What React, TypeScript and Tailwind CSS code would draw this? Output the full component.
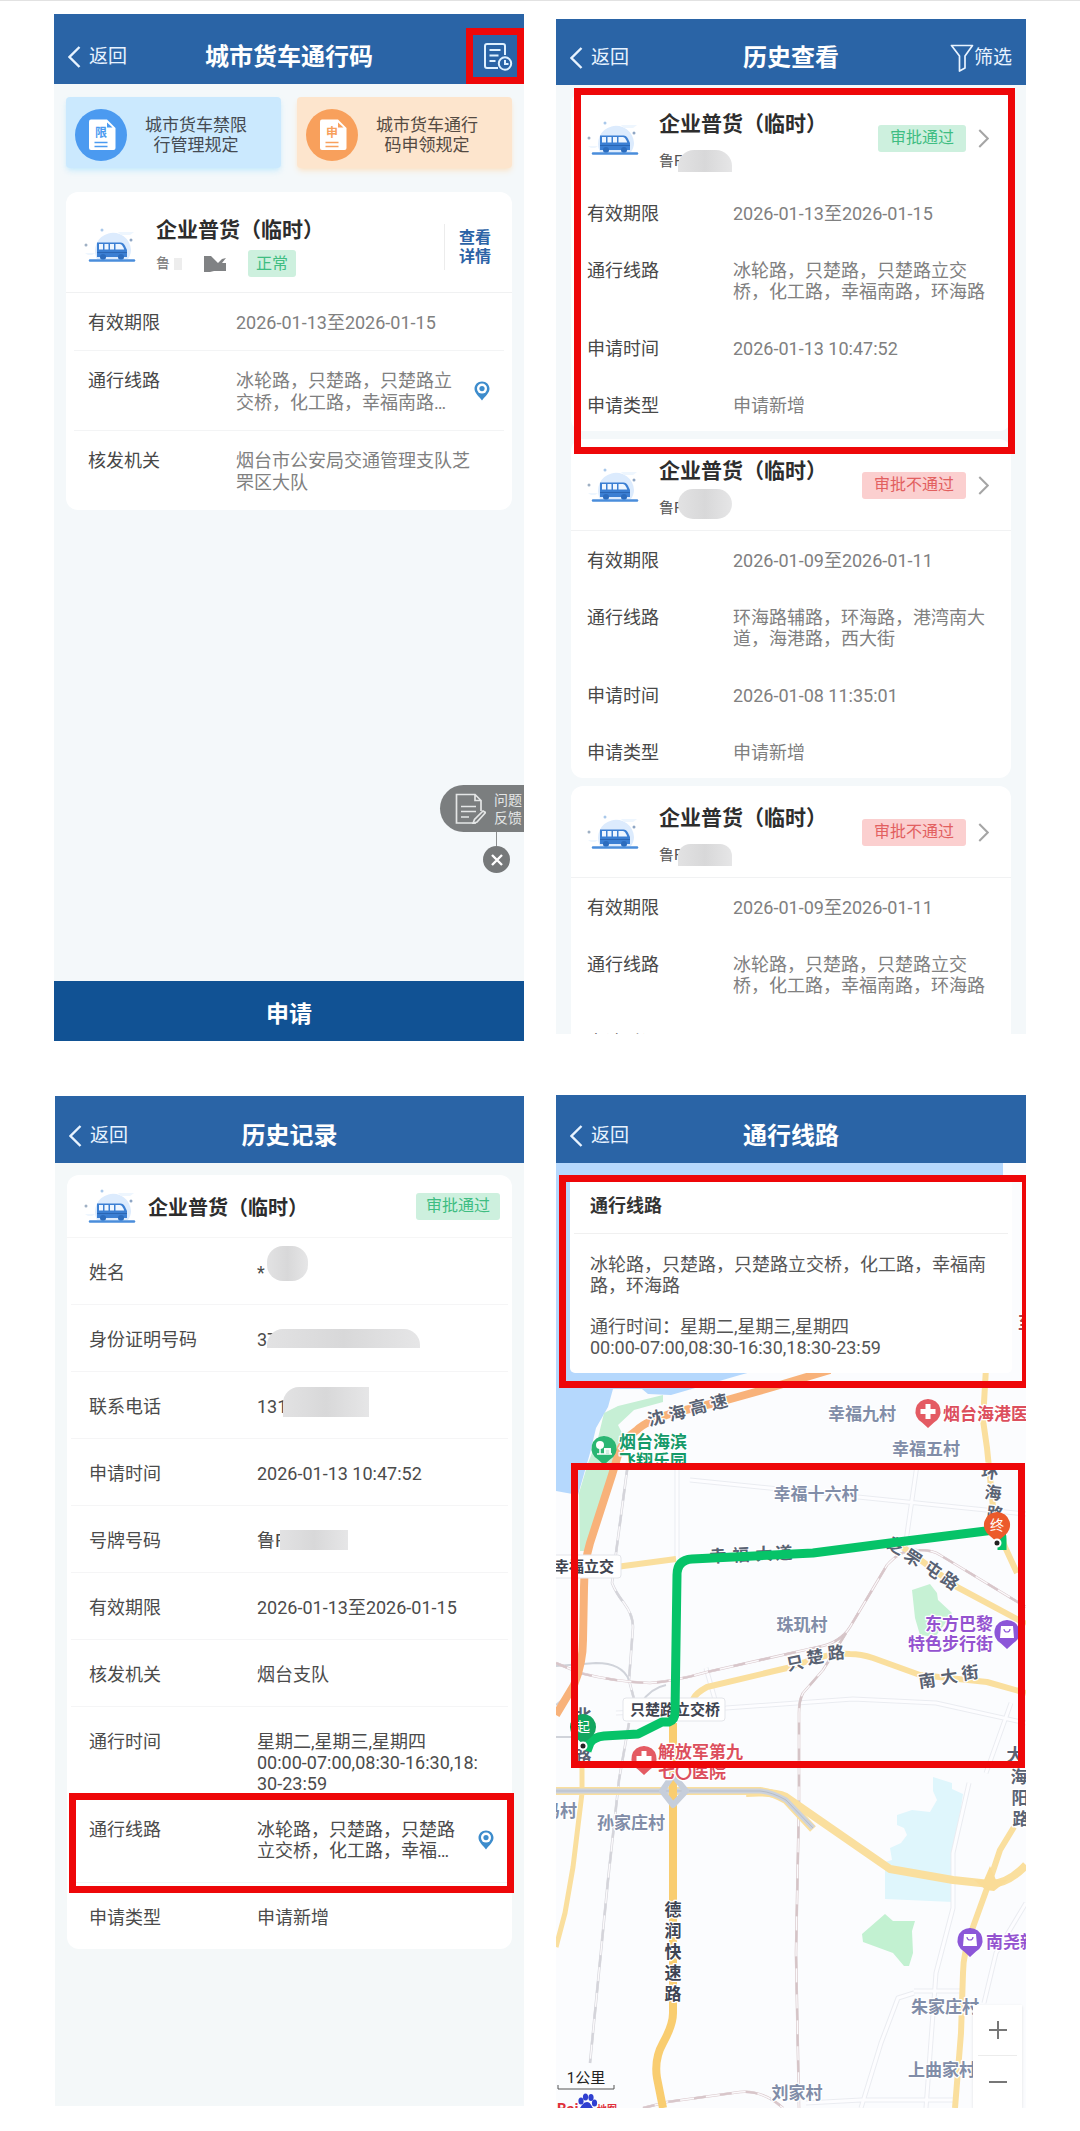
import type { ReactNode } from "react";
import { clsx } from "clsx";

const ROUTE = "冰轮路，只楚路，只楚路立交桥，化工路，幸福南路，环海路";

function BusIcon({ className }: { className?: string }) {
  return (
    <svg viewBox="0 0 52 38" className={clsx("h-[38px] w-[52px] shrink-0", className)} aria-hidden>
      <path d="M13 33a18 18 0 1 1 34-9c0 3-1 6-3 9z" fill="#dcebfd" />
      <path d="M34 6h16l-4 3h-9zM1 27h10l-3 2H4z" fill="#eef6fe" />
      <circle cx="18" cy="4" r="1.5" fill="#a9c8ea" />
      <circle cx="47" cy="14" r="1.5" fill="#8fa6c4" />
      <circle cx="2" cy="19" r="1.5" fill="#9fb0c4" />
      <path d="M13 16.5h23.5c2 0 3.200 1 4.500 3.300l2 4.200V31H13z" fill="#3b7fd3" />
      <path d="M15 18h4v5.500h-4zM20.500 18h4v5.500h-4zM26 18h4v5.500h-4zM31.500 18h4.500c1.600 0 3.500 3 4.200 5.500h-8.700z" fill="#eef6ff" />
      <path d="M13 26h30v1H13z" fill="#2a66b4" />
      <circle cx="19" cy="31" r="3" fill="#2c6cbd" />
      <circle cx="37" cy="31" r="3" fill="#2c6cbd" />
      <path d="M6 34.500h44" stroke="#4a8ddb" strokeWidth="2.500" strokeLinecap="round" />
    </svg>
  );
}

function PinIcon() {
  return (
    <svg viewBox="0 0 16 20" className="h-5 w-4" aria-hidden>
      <path d="M8 0.500C3.700 0.500 0.500 3.700 0.500 7.800 0.500 12 4.500 15 8 19.500c3.500-4.500 7.500-7.500 7.500-11.700C15.500 3.700 12.300 0.500 8 0.500z" fill="#3d8ccc" />
      <circle cx="8" cy="7.600" r="5" fill="#fff" />
      <circle cx="8" cy="7.600" r="2.600" fill="#3d8ccc" />
    </svg>
  );
}

function DocIcon({ char, tone }: { char: string; tone: "blue" | "orange" }) {
  const color = tone === "blue" ? "#4b9af0" : "#f8a05c";
  return (
    <svg viewBox="0 0 52 52" className="size-[52px] shrink-0" aria-hidden>
      <circle cx="26" cy="26" r="26" fill={color} />
      <path d="M16 10.500h16l8.500 8.500v20a2 2 0 0 1-2 2H16a2 2 0 0 1-2-2V12.500a2 2 0 0 1 2-2z" fill="#fff" />
      <path d="M32 13.500v5h5.500z" fill={color} />
      <text x="26" y="28" textAnchor="middle" fontSize="12" fontWeight="700" fill={color}>
        {char}
      </text>
      <path d="M19.500 33.500h13M19.500 37.500h13" stroke={color} strokeWidth="1.600" />
    </svg>
  );
}

function Chevron({ className, flip }: { className?: string; flip?: boolean }) {
  return (
    <svg viewBox="0 0 13 22" className={className} fill="none" stroke="currentColor" strokeWidth="2.400" aria-hidden>
      <path d={flip ? "M1.500 1 11.500 11 1.500 21" : "M11.500 1 1.500 11 11.500 21"} />
    </svg>
  );
}

function Header({ title, className, children }: { title: string; className?: string; children?: ReactNode }) {
  return (
    <header
      className={clsx(
        "grid shrink-0 grid-cols-[1fr_auto_1fr] items-center bg-[#2a64a6] text-white",
        className,
      )}
    >
      <button type="button" className="flex items-center gap-2 justify-self-start pl-[14px] text-[19px] leading-6 text-[#e8f3ff]">
        <Chevron className="h-[22px] w-[13px]" />
        返回
      </button>
      <h1 className="text-[24px] leading-7 font-bold">{title}</h1>
      <div className="justify-self-end">{children}</div>
    </header>
  );
}

function Highlight({ className }: { className: string }) {
  return <div aria-hidden className={clsx("pointer-events-none absolute z-10 border-[7px] border-[#ee0709]", className)} />;
}

function Badge({ tone, compact, children }: { tone: "green" | "red"; compact?: boolean; children: ReactNode }) {
  return (
    <span
      className={clsx(
        "flex h-[27px] items-center rounded-[3px] text-[16px] leading-5",
        tone === "green" ? "bg-[#cdf0de] text-[#3fbd82]" : "bg-[#fbcfcf] text-[#e2605f]",
        compact ? "px-2" : "px-3",
      )}
    >
      {children}
    </span>
  );
}

function Mosaic({ className }: { className: string }) {
  return <span aria-hidden className={clsx("shrink-0 bg-linear-to-r from-[#e2e2e3] via-[#d8d8d9] to-[#e6e6e7]", className)} />;
}

function PassScreen() {
  const rows = [
    { label: "有效期限", value: "2026-01-13至2026-01-15" },
    { label: "通行线路", value: ROUTE, pin: true },
    { label: "核发机关", value: "烟台市公安局交通管理支队芝罘区大队" },
  ];

  return (
    <section className="relative flex min-h-[1027px] flex-col bg-[#f4f8fa]">
      <Header title="城市货车通行码" className="h-[70px] pt-4">
        <button type="button" aria-label="历史查看" className="relative block pr-[11px]">
          <svg viewBox="0 0 30 28" className="h-7 w-[30px]" fill="none" stroke="#dff1ff" strokeWidth="2" aria-hidden>
            <path d="M15 25H4a2 2 0 0 1-2-2V3a2 2 0 0 1 2-2h16a2 2 0 0 1 2 2v9" />
            <path d="M6.500 7h11M6.500 12.500h9M6.500 18h6" />
            <circle cx="22" cy="20.500" r="6.200" />
            <path d="M22 17v4h3.500" />
          </svg>
          <Highlight className="-top-[15px] right-0 -bottom-[13px] -left-[17px]" />
        </button>
      </Header>

      <div className="grid grid-cols-2 gap-4 px-3 pt-[13px]">
        <a href="#limit" className="flex h-[71px] items-center gap-2 rounded-[4px] bg-[#cbe9fe] pt-1 pl-[9px] shadow-md shadow-sky-200/60">
          <DocIcon char="限" tone="blue" />
          <span className="flex-1 pr-6 text-center text-[17px] leading-5 text-[#454b52]">
            城市货车禁限
            <br />
            行管理规定
          </span>
        </a>
        <a href="#apply-rule" className="flex h-[71px] items-center gap-2 rounded-[4px] bg-[#fde5cd] pt-1 pl-[9px] shadow-md shadow-orange-200/50">
          <DocIcon char="申" tone="orange" />
          <span className="flex-1 pr-6 text-center text-[17px] leading-5 text-[#544a42]">
            城市货车通行
            <br />
            码申领规定
          </span>
        </a>
      </div>

      <article className="mx-3 mt-6 rounded-xl bg-white">
        <div className="flex h-[101px] items-start border-b border-[#f0f1f2] pl-[18px]">
          <BusIcon className="mt-[34px]" />
          <div className="ml-5 flex-1 pt-6">
            <h2 className="text-[21px] leading-7 font-bold text-[#2d2d2d]">企业普货（临时）</h2>
            <div className="mt-[6px] flex items-center text-[14px] text-[#777]">
              鲁
              <span className="ml-1 h-3 w-2 bg-[#ededed]" />
              <svg viewBox="0 0 22 16" className="ml-[22px] h-4 w-[22px]" fill="#808284" aria-hidden>
                <path d="M0 0h7l7 7 4-4 4-1-4 5h4v8H10l-4 1H0z" />
              </svg>
              <span className="ml-[22px]">
                <Badge tone="green" compact>
                  正常
                </Badge>
              </span>
            </div>
          </div>
          <a href="#detail" className="mt-8 mr-[21px] flex h-[46px] items-center border-l border-[#ececec] pl-[14px] text-[16px] leading-[19px] font-bold text-[#2c63a6]">
            查看
            <br />
            详情
          </a>
        </div>
        <dl>
          {rows.map((row) => (
            <div key={row.label} className="mx-2 flex border-b border-[#f3f4f5] pt-[19px] pb-4 text-[18px] leading-[22px] last:border-b-0">
              <dt className="w-[162px] shrink-0 pl-[14px] text-[#484848]">{row.label}</dt>
              {row.pin ? (
                <>
                  <dd className="line-clamp-2 w-[222px] text-[#808080]">{row.value}</dd>
                  <a href="#map" aria-label="查看线路" className="ml-4 pt-[11px]">
                    <PinIcon />
                  </a>
                </>
              ) : (
                <dd className="max-w-[245px] text-[#808080]">{row.value}</dd>
              )}
            </div>
          ))}
        </dl>
      </article>

      <div className="absolute top-[771px] right-0 flex w-[84px] flex-col">
        <button type="button" className="flex h-[47px] items-center gap-2 rounded-l-full bg-[#7b7e7f] pl-[15px] text-[14px] leading-[18px] text-[#e4e6e6]">
          <svg viewBox="0 0 31 31" className="size-[31px] shrink-0" fill="none" stroke="#e4e6e6" strokeWidth="1.700" aria-hidden>
            <path d="M21 30H1.500V1.500H20l6 6V18M20 1.500v6h6M6 13.500h15M6 18.500h15M6 24h8" />
            <path d="m28 18 2.500 1.500L22 29l-4 1.500 1.500-4z" />
          </svg>
          <span>
            问题
            <br />
            反馈
          </span>
        </button>
        <span className="ml-14 h-[14px] w-px bg-[#8a8d8e]" />
        <button type="button" aria-label="关闭" className="ml-[43px] flex size-[27px] items-center justify-center rounded-full bg-[#76797a]">
          <svg viewBox="0 0 12 12" className="size-3" stroke="#fff" strokeWidth="2.400" aria-hidden>
            <path d="m1 1 10 10M11 1 1 11" />
          </svg>
        </button>
      </div>

      <button type="button" className="mt-auto h-[60px] bg-[#115294] pt-2 text-[23px] font-bold text-white">
        申请
      </button>
    </section>
  );
}

type HistoryItem = { period: string; route: string; time: string; passed: boolean; mask: string };

const HISTORY: HistoryItem[] = [
  { period: "2026-01-13至2026-01-15", route: ROUTE, time: "2026-01-13 10:47:52", passed: true, mask: "h-[22px] rounded-t-2xl" },
  { period: "2026-01-09至2026-01-11", route: "环海路辅路，环海路，港湾南大道，海港路，西大街", time: "2026-01-08 11:35:01", passed: false, mask: "-mt-2 h-[30px] rounded-2xl" },
  { period: "2026-01-09至2026-01-11", route: ROUTE, time: "2026-01-08 11:35:01", passed: false, mask: "h-[22px] rounded-t-xl" },
];

function HistoryCard({ item }: { item: HistoryItem }) {
  const rows = [
    ["有效期限", item.period],
    ["通行线路", item.route],
    ["申请时间", item.time],
    ["申请类型", "申请新增"],
  ];

  return (
    <article className="relative rounded-xl bg-white">
      <div className={clsx("flex h-[92px] items-center border-b pt-px pr-[22px] pl-4", item.passed ? "border-transparent" : "border-[#f1f2f3]")}>
        <BusIcon />
        <div className="ml-5 flex-1 self-start pt-[17px]">
          <h2 className="text-[21px] leading-7 font-bold text-[#2d2d2d]">企业普货（临时）</h2>
          <div className="mt-3 flex h-[22px] items-center text-[15px] leading-[22px] text-[#555]">
            鲁F
            <Mosaic className={clsx("-ml-1 w-[54px]", item.mask)} />
          </div>
        </div>
        <Badge tone={item.passed ? "green" : "red"}>{item.passed ? "审批通过" : "审批不通过"}</Badge>
        <Chevron flip className="ml-3 h-[19px] w-[11px] text-[#a5a5a5]" />
      </div>
      <dl className="flex flex-col gap-9 pt-[19px] pb-[15px]">
        {rows.map(([label, value]) => (
          <div key={label} className="flex pr-5 pl-4 text-[18px] leading-[21px]">
            <dt className="w-[146px] shrink-0 text-[#484848]">{label}</dt>
            <dd className="text-[#808080]">{value}</dd>
          </div>
        ))}
      </dl>
      {item.passed && <Highlight className="-top-1 -right-1 -bottom-[23px] left-[3px]" />}
    </article>
  );
}

function HistoryScreen() {
  return (
    <section className="mt-[5px] flex h-[1015px] flex-col overflow-hidden bg-[#f4f8fa]">
      <Header title="历史查看" className="h-[66px] pt-3">
        <button type="button" className="flex items-center pr-[14px] text-[19px] leading-6 text-[#e8f3ff]">
          <svg viewBox="0 0 24 28" className="h-7 w-6" fill="none" stroke="currentColor" strokeWidth="1.700" strokeLinejoin="round" aria-hidden>
            <path d="M1.500 1.500h21L15 12v12l-5.500 3V12z" />
          </svg>
          筛选
        </button>
      </Header>
      <div className="flex flex-col gap-2 px-[15px] pt-[7px]">
        {HISTORY.map((item, i) => (
          <HistoryCard key={i} item={item} />
        ))}
      </div>
    </section>
  );
}

type RecordRow = { label: string; value: string; mask?: string; pin?: boolean; tight?: boolean };

const RECORD: RecordRow[] = [
  { label: "姓名", value: "*", mask: "-mt-4 ml-[2px] h-[35px] w-[41px] rounded-2xl" },
  { label: "身份证明号码", value: "37", mask: "-ml-[10px] h-[19px] w-[153px] rounded-tl-2xl rounded-tr-2xl" },
  { label: "联系电话", value: "131", mask: "-mt-[9px] -ml-1 h-[30px] w-[86px] rounded-tl-2xl" },
  { label: "申请时间", value: "2026-01-13 10:47:52" },
  { label: "号牌号码", value: "鲁F", mask: "-ml-[5px] h-5 w-[68px]" },
  { label: "有效期限", value: "2026-01-13至2026-01-15" },
  { label: "核发机关", value: "烟台支队" },
  { label: "通行时间", value: "星期二,星期三,星期四\n00:00-07:00,08:30-16:30,18:30-23:59", tight: true },
  { label: "通行线路", value: ROUTE, pin: true },
  { label: "申请类型", value: "申请新增" },
];

function RecordScreen() {
  return (
    <section className="mt-px ml-px flex min-h-[1010px] flex-col self-start bg-[#f4f8f9]">
      <Header title="历史记录" className="h-[67px] pt-[13px]" />
      <article className="mx-3 mt-3 rounded-xl bg-white">
        <div className="flex h-[63px] items-center border-b border-[#f6f6f6] pr-3 pl-[17px]">
          <BusIcon />
          <h2 className="ml-3 flex-1 pt-1 text-[20px] leading-7 font-bold text-[#2d2d2d]">企业普货（临时）</h2>
          <Badge tone="green" compact>
            <span className="px-[2px]">审批通过</span>
          </Badge>
        </div>
        <dl>
          {RECORD.map((row) => (
            <div
              key={row.label}
              className={clsx(
                "relative mx-1 flex border-b border-[#f5f5f6] pt-6 text-[18px] leading-[21px] text-[#4b4b4b] last:border-b-0",
                row.tight ? "pb-0" : "pb-[21px]",
              )}
            >
              <dt className="w-[186px] shrink-0 pl-[18px]">{row.label}</dt>
              {row.pin ? (
                <>
                  <dd className="line-clamp-2 w-[208px]">{row.value}</dd>
                  <a href="#map" aria-label="查看线路" className="ml-[13px] pt-[11px]">
                    <PinIcon />
                  </a>
                  <Highlight className="-top-[2px] -right-[6px] -bottom-[11px] -left-[2px]" />
                </>
              ) : (
                <dd className={clsx(row.tight && "w-[224px] break-all whitespace-pre-line", row.mask && "flex h-[21px]")}>
                  {row.value}
                  {row.mask && <Mosaic className={row.mask} />}
                </dd>
              )}
            </div>
          ))}
        </dl>
      </article>
    </section>
  );
}

const VILLAGES: [string, number, number][] = [
  ["幸福九村", 306, 251],
  ["幸福五村", 370, 286],
  ["幸福十六村", 260, 331],
  ["珠玑村", 246, 462],
  ["孙家庄村", 75, 660],
  ["冯村", 4, 648],
  ["朱家庄村", 389, 844],
  ["上曲家村", 386, 907],
  ["刘家村", 241, 930],
];

// one entry per character: char, x, y, rotation
const ROAD_CHARS: [string, number, number, number][] = [
  ["沈", 100, 255, -14], ["海", 121, 250, -14], ["高", 142, 244, -14], ["速", 163, 239, -14],
  ["幸", 162, 393, -3], ["福", 185, 392, -3], ["大", 208, 391, -3], ["道", 228, 390, -3],
  ["芝", 340, 383, 30], ["罘", 357, 395, 33], ["屯", 377, 407, 35], ["路", 394, 418, 35],
  ["只", 239, 500, -12], ["楚", 259, 494, -10], ["路", 280, 490, -6],
  ["南", 371, 518, -8], ["大", 393, 514, -8], ["街", 414, 510, -8],
  ["环", 434, 309, 8], ["海", 437, 330, 6], ["路", 439, 351, 6],
  ["大", 459, 592, 0], ["海", 463, 614, 0], ["阳", 464, 635, 0], ["路", 465, 656, 0],
  ["北", 27, 553, 0], ["路", 27, 594, 0],
];

function MapPin({ x, y, color, kind }: { x: number; y: number; color: string; kind: "cross" | "bag" | "tree" }) {
  return (
    <g transform={`translate(${x} ${y})`}>
      <path d="M0-13a12.500 12.500 0 0 1 6 23.500L0 16l-6-5.500A12.500 12.500 0 0 1 0-13z" fill={color} />
      {kind === "cross" && <path d="M-2.500-8h5v5h5v5h-5v5h-5V2h-5v-5h5z" fill="#fff" />}
      {kind === "bag" && (
        <>
          <path d="M-6-7H6l1 12H-7z" fill="#fff" />
          <path d="M-3-4c0 4 6 4 6 0" fill="none" stroke={color} strokeWidth="1.200" />
        </>
      )}
      {kind === "tree" && (
        <>
          <circle cx="-4" cy="-4" r="4" fill="#fff" />
          <path d="M-4-2V5M0 0h6v5M1 5V0" stroke="#fff" strokeWidth="1.500" fill="none" />
          <path d="M0-1h7v5H0z" fill="#fff" opacity="0.800" />
          <path d="M-7 5H8" stroke="#fff" strokeWidth="1.500" />
        </>
      )}
    </g>
  );
}

function Rail({ d, color }: { d: string; color: string }) {
  return (
    <>
      <path d={d} stroke={color} strokeWidth="2.600" />
      <path d={d} stroke="#fbf9fb" strokeWidth="1.400" />
      <path d={d} stroke={color} strokeWidth="2.200" strokeDasharray="12 14" />
    </>
  );
}

function RouteMap() {
  return (
    <svg
      viewBox="0 0 470 945"
      preserveAspectRatio="xMidYMin slice"
      className="absolute inset-0 size-full"
      role="img"
      aria-label="通行线路地图"
    >
      <rect width="470" height="945" fill="#fbfcfe" />
      <path d="M0 0H447V205H210L184 212 115 232 92 231 86 226H57L52 244 40 265 34 290 22 332 0 328z" fill="#b5d8fd" />
      <path d="M107 232 62 243 48 250 42 275 32 300 23 330 24 388H32L46 340 62 292 66 270 62 262 78 247 107 239z" fill="#c6efd5" />
      <path d="M356 427 374 421 381 430 382 437 396 450 388 462 379 474 364 472 359 455z" fill="#c6f1d4" />
      <path d="M329 751 337 758H359L356 768 357 790 353 803H348L337 790 307 779 306 771z" fill="#c2f1d1" />
      <path d="M377 614 396 620 396 626 407 631 405 645 397 684V739L329 736V699L336 697 334 685 345 680 351 672 348 665 341 662 341 652 356 647 374 649 381 637 377 628z" fill="#dff6fc" />

      <g fill="none" strokeLinejoin="round" strokeLinecap="butt">
        <g stroke="#eaecf1" strokeWidth="5">
          <path d="M121 300V395M134 317 470 351M361 302 349 385M60 550 170 545 297 536 380 540 470 560M413 620 397 690V745L380 810 370 945M358 830 342 835 325 880 305 945M358 828H405M150 505 160 540M455 540 430 610M470 740 440 790 428 840M250 940 305 937H400" />
        </g>
        <g stroke="#fdfdff" strokeWidth="3">
          <path d="M121 300V395M134 317 470 351M361 302 349 385M60 550 170 545 297 536 380 540 470 560M413 620 397 690V745L380 810 370 945M358 830 342 835 325 880 305 945M358 828H405M150 505 160 540M455 540 430 610M470 740 440 790 428 840M250 940 305 937H400" />
        </g>
        <Rail d="M72 300 56 420Q60 430 68 440 77 452 77 464L73 517 79 540M73 560 63 617 52 717 34 900" color="#d4d4da" />
        <path d="M0 503 40 500Q66 500 73 517M0 542 20 525M85 540Q95 525 110 522M0 574H24" stroke="#d0d3da" strokeWidth="2" />
        <Rail d="M0 500 24 510Q60 519 94 520 120 518 151 509L262 484Q284 480 294 464L331 402Q345 386 361 387 378 387 384 392L470 444" color="#d8c6ca" />
        <Rail d="M290 470 267 507 247 530Q243 537 243 550V637L240 790 243 945" color="#d5c4c7" />
        <Rail d="M87 945 111 939 184 929Q207 927 227 945" color="#d8c6ca" />

        <g stroke="#fadf9e" strokeWidth="6">
          <path d="M60 404 120 396" />
          <path d="M334 377 351 387 401 424 470 461" />
          <path d="M430 205 427 257 431 285 437 344 449 384 461 410" />
          <path d="M137 536Q140 530 151 524L231 505 261 495Q280 490 294 491 305 491 317 495L364 512 431 519 470 530" />
          <path d="M26 580V630L17 704 9 750 0 784" strokeWidth="5" />
          <path d="M0 628H204Q216 629 230 637L257 666" strokeWidth="8" />
          <path d="M458 664 444 687 434 717 417 764Q407 790 407 810L405 870 399 945" />
          <path d="M190 630Q217 628 230 634L334 706 397 717 434 721Q452 721 470 702" strokeWidth="8" />
        </g>
        <path d="M418 717H452L438 728 430 727zM434 703 440 717H428z" fill="#fadc97" />
        <path d="M0 628H204Q216 629 230 637L257 665" stroke="#ccd2dc" strokeWidth="5" />
        <path d="M0 628H204Q216 629 230 637L257 665" stroke="#b6bdc9" strokeWidth="1" />
        <path d="M117 560V850Q117 862 107 880 98 896 101 915L107 945" stroke="#f9cd70" strokeWidth="8" />
        <path d="M106 628 117 612 130 628 117 642z" stroke="#c6cedb" strokeWidth="6" />
        <path d="M274 207 217 224 171 237 117 250Q90 258 81 267 67 276 62 292L56 312 34 380Q28 400 28 425L27 477Q27 500 18 522L0 552" stroke="#f8b27a" strokeWidth="8" />
      </g>

      <g fontWeight="700" textAnchor="middle" dominantBaseline="central" stroke="#fff" strokeWidth="2.500" paintOrder="stroke" strokeLinejoin="round">
        <g fontSize="17" fill="#818da8">
          {VILLAGES.map(([name, x, y]) => (
            <text key={name} x={x} y={y}>
              {name}
            </text>
          ))}
        </g>
        <g fontSize="17" fill="#596273">
          {ROAD_CHARS.map(([char, x, y, angle], i) => (
            <text key={i} transform={`translate(${x} ${y}) rotate(${angle})`}>
              {char}
            </text>
          ))}
        </g>
        <g fontSize="17" fill="#3d4453">
          {["德", "润", "快", "速", "路"].map((char, i) => (
            <text key={i} x="117" y={747 + i * 21}>
              {char}
            </text>
          ))}
        </g>
        <g fontSize="17" textAnchor="start">
          <text x="387" y="251" fill="#dc4f5d">烟台海港医院</text>
          <text x="102" y="589" fill="#dc4f5d">解放军第九</text>
          <text x="102" y="609" fill="#dc4f5d">七〇医院</text>
          <text x="63" y="279" fill="#159a69">烟台海滨</text>
          <text x="63" y="298" fill="#159a69">飞翔乐园</text>
          <text x="430" y="779" fill="#9453d0">南尧新村</text>
          <text x="462" y="160" fill="#a44a55">至</text>
        </g>
        <g fontSize="17" textAnchor="end" fill="#9453d0">
          <text x="437" y="461">东方巴黎</text>
          <text x="437" y="481">特色步行街</text>
        </g>
      </g>

      <g fontSize="15" fontWeight="700" fill="#3f4450" dominantBaseline="central">
        <rect x="-4" y="392" width="69" height="23" rx="3" fill="#fff" stroke="#e3e5ea" />
        <text x="-2" y="404">幸福立交</text>
        <rect x="67" y="535" width="102" height="23" rx="3" fill="#fff" stroke="#e3e5ea" />
        <text x="74" y="547">只楚路立交桥</text>
      </g>

      <MapPin x={372} y={249} color="#e45b63" kind="cross" />
      <MapPin x={88} y={596} color="#e45b63" kind="cross" />
      <MapPin x={48} y={286} color="#2bb673" kind="tree" />
      <MapPin x={451} y={470} color="#8c56d8" kind="bag" />
      <MapPin x={414} y={778} color="#8c56d8" kind="bag" />

      <path
        d="M31 588 34 580Q38 574 48 573L82 571 106 559H113Q119 557 119 549L121 412Q121 397 136 396L257 390 334 380 438 367Q446 368 446 376V387"
        fill="none"
        stroke="#06c368"
        strokeWidth="9"
        strokeLinejoin="round"
      />
      <g textAnchor="middle" dominantBaseline="central" fontSize="14" fill="#fff">
        <path d="M27 551a13 13 0 0 1 7 24l-7 6-7-6a13 13 0 0 1 7-24z" fill="#12a65f" />
        <text x="27" y="564">起</text>
        <path d="M441 349a13 13 0 0 1 7 24l-7 6-7-6a13 13 0 0 1 7-24z" fill="#ec5a2b" />
        <text x="441" y="362">终</text>
      </g>
      <g fill="#222" stroke="#fff" strokeWidth="2">
        <circle cx="27" cy="583" r="3.500" />
        <circle cx="441" cy="380" r="3.500" />
      </g>

      <rect x="18.500" y="303.500" width="447" height="298" fill="none" stroke="#ee0709" strokeWidth="7" />

      <text x="30" y="920" fontSize="15" textAnchor="middle" fill="#222">1公里</text>
      <path d="M2 922v4h56v-4" fill="none" stroke="#555" strokeWidth="1" />
      <g fill="#e0303a" fontWeight="700">
        <text x="1" y="951" fontSize="15">Bai</text>
        <text x="41" y="950" fontSize="10">地图</text>
      </g>
      <g fill="#2f3fd0">
        <ellipse cx="25" cy="938" rx="2.600" ry="3.500" />
        <ellipse cx="29.500" cy="934" rx="2.600" ry="3.500" />
        <ellipse cx="35" cy="934.500" rx="2.600" ry="3.500" />
        <ellipse cx="38.500" cy="940" rx="2.600" ry="3.500" />
        <path d="M31 939c3 0 4 3 6 6H24c2-3 4-6 7-6z" />
      </g>
    </svg>
  );
}

function MapScreen() {
  return (
    <section className="flex h-[1013px] flex-col">
      <Header title="通行线路" className="h-[68px] pt-[14px]" />
      <div className="relative flex-1 overflow-hidden pt-3">
        <RouteMap />
        <div className="relative">
          <article className="mx-[14px] rounded-b-[5px] bg-white text-[18px] leading-[21px] text-[#555]">
            <h2 className="mx-1 border-b border-[#f0f0f0] px-4 pt-5 pb-[17px] font-bold text-[#333]">通行线路</h2>
            <div className="px-5 pt-5 pb-[15px]">
              <p>{ROUTE}</p>
              <p className="mt-5">
                通行时间：星期二,星期三,星期四
                <br />
                00:00-07:00,08:30-16:30,18:30-23:59
              </p>
            </div>
          </article>
          <Highlight className="top-0 -right-[3px] -bottom-[15px] left-[3px]" />
        </div>
        <div className="absolute right-1 bottom-0 w-[49px] bg-white shadow-sm">
          <button type="button" aria-label="放大" className="flex h-[50px] w-full items-center justify-center">
            <svg viewBox="0 0 18 18" className="size-[18px]" stroke="#777" strokeWidth="2" aria-hidden>
              <path d="M9 0v18M0 9h18" />
            </svg>
          </button>
          <hr className="mx-[5px] border-[#ececec]" />
          <button type="button" aria-label="缩小" className="flex h-[52px] w-full items-center justify-center">
            <svg viewBox="0 0 18 18" className="size-[18px]" stroke="#777" strokeWidth="2" aria-hidden>
              <path d="M0 9h18" />
            </svg>
          </button>
        </div>
      </div>
    </section>
  );
}

export default function App() {
  return (
    <main
      lang="zh-CN"
      className="grid grid-cols-2 items-start gap-x-8 gap-y-[54px] border-t border-[#e2e2e2] bg-white px-[54px] pt-[13px] pb-[23px] font-[Roboto,'Noto_Sans_CJK_SC',sans-serif]"
    >
      <PassScreen />
      <HistoryScreen />
      <RecordScreen />
      <MapScreen />
    </main>
  );
}
